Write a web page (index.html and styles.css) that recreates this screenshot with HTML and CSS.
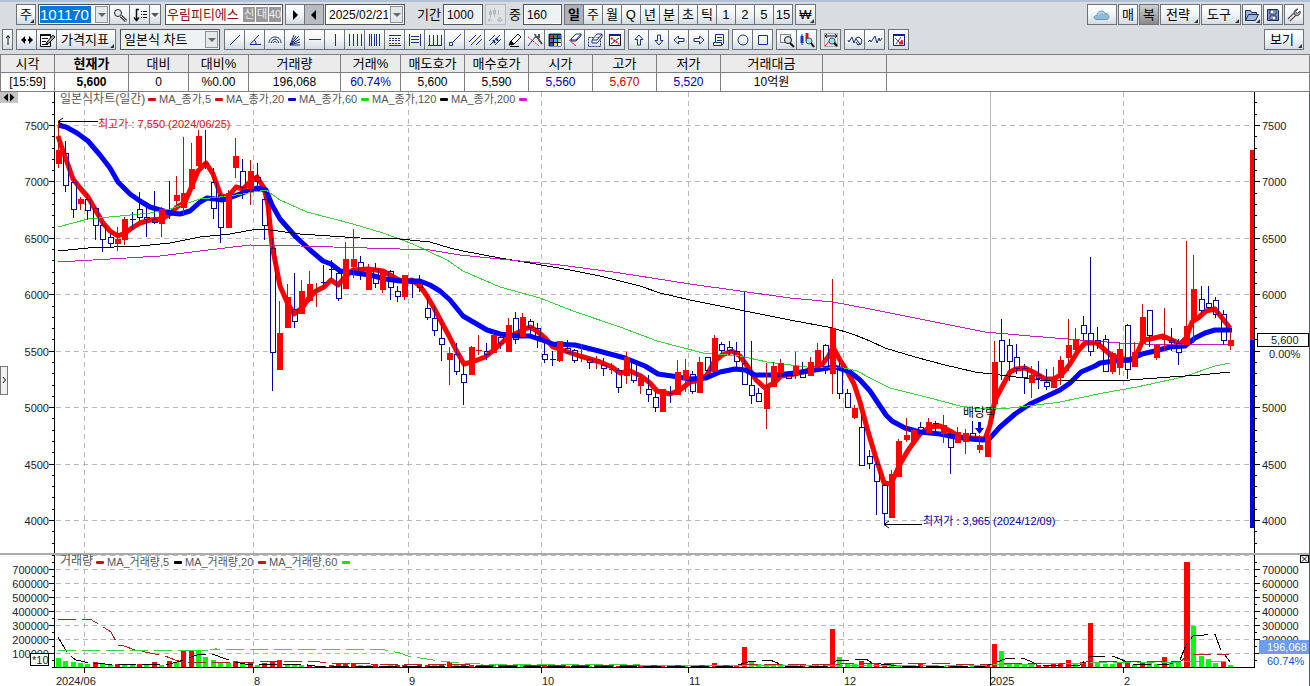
FILE: index.html
```
<!DOCTYPE html>
<html lang="ko">
<head>
    <meta charset="utf-8">
    <title>우림피티에스 차트</title>
    <link rel="stylesheet" href="styles.css">
</head>
<body>
    <header class="toolbars">
        <div class="bar top">
            <button class="btn first more">주</button>
            <div class="field code">
                <input class="code-input" aria-label="종목코드" value="101170">
                <button class="arrow" aria-label="종목 목록"></button>
            </div>
            <div class="group">
                <button class="btn" aria-label="종목 검색"><svg class="icon" viewBox="0 0 16 16"><circle cx="6" cy="6" r="3.5" stroke="#222" fill="#dfe9f2"/><circle cx="5" cy="5" r="1" fill="#fff" stroke="none"/><path d="M9 9l5 5" stroke="#222" stroke-width="3"/><path d="M9 9l5 5" stroke="#fff"/></svg></button>
                <button class="btn" aria-label="정렬"><svg class="icon" viewBox="0 0 16 16"><path d="M7 2.500H4.500V13M2 10.500l2.500 3 2.500-3" stroke="#111" stroke-width="1.500"/><path d="M9 4.500h1m1 0h4M9 7.500h1m1 0h4M9 10.500h1m1 0h4" stroke="#111"/></svg></button>
                <button class="btn thin" aria-label="정렬 목록"><span class="tri"></span></button>
            </div>
            <div class="field name"><span class="stock">우림피티에스</span><span class="tag">신</span><span class="tag">대</span><span class="tag">40</span></div>
            <div class="group step">
                <button class="btn" aria-label="다음 종목"><svg class="icon" viewBox="0 0 16 16"><path d="M6 3l5 5-5 5z" fill="#000" stroke="none"/></svg></button>
                <button class="btn gray" aria-label="이전 종목"><svg class="icon" viewBox="0 0 16 16"><path d="M10 3L5 8l5 5z" fill="#000" stroke="none"/></svg></button>
            </div>
            <div class="field date">
                <input aria-label="날짜" value="2025/02/21">
                <button class="arrow" aria-label="달력"></button>
            </div>
            <label class="caption" for="period">기간</label>
            <div class="field num"><input id="period" value="1000"></div>
            <button class="btn off" disabled aria-label="봉 간격"><svg class="icon" viewBox="0 0 16 16"><path d="M3.500 2v9M7.500 1v9M11.500 3v5M2 13h4m4 0h5M12 10v5M13 10l2 3-2 2M3 11l-2 2 2 2" stroke="#b4b9bd"/><path d="M2 4h3v4H2zM6 3h3v4H6z" fill="#b4b9bd" stroke="none"/></svg></button>
            <label class="caption mid" for="count">중</label>
            <div class="field num small"><input id="count" value="160"></div>
            <div class="group periods">
                <button class="btn pressed">일</button>
                <button class="btn">주</button>
                <button class="btn">월</button>
                <button class="btn">Q</button>
                <button class="btn">년</button>
                <button class="btn">분</button>
                <button class="btn">초</button>
                <button class="btn">틱</button>
                <button class="btn">1</button>
                <button class="btn">2</button>
                <button class="btn">5</button>
                <button class="btn">15</button>
            </div>
            <button class="btn more">₩</button>
            <div class="right">
                <button class="btn cloud" aria-label="클라우드"><svg class="icon wide" viewBox="0 0 18 16"><path d="M4 12.500c-4 0-4-4 0-4 0-5 7-6 8-2 4-1 6 6 1 6z" fill="#8fbbda" stroke="#6a98ba"/><path d="M5 8c1-3 5-4 6-1" stroke="#d5e8f4"/></svg></button>
                <button class="btn">매</button>
                <button class="btn dark">복</button>
                <button class="btn text more">전략</button>
                <button class="btn text more">도구</button>
                <button class="btn more" aria-label="열기"><svg class="icon" viewBox="0 0 16 16"><path d="M1.500 13.500v-10h5l1 2h5v2M1.500 13.500l3-6h10l-3 6z" fill="#9fb4e0" stroke="#182b55"/></svg></button>
                <button class="btn" aria-label="저장"><svg class="icon" viewBox="0 0 16 16"><path d="M2.500 2.500h10l1 1v10h-11z" fill="#7f96d0" stroke="#182b55"/><path d="M5 3h6v4H5zM5 9h6v4H5z" fill="#fff" stroke="#182b55"/><path d="M9 4v2M7 10v3" stroke="#182b55"/></svg></button>
                <button class="btn" aria-label="설정"><svg class="icon" viewBox="0 0 16 16"><path d="M3 13l6-6" stroke="#444" stroke-width="4"/><path d="M3 13l6-6" stroke="#ddd" stroke-width="2"/><path d="M12 2l-2.500 2.500 2 2L14 4c1 3-2 6-5 4-2-3 0-6 3-6z" fill="#aaa" stroke="#444"/></svg></button>
            </div>
        </div>
        <div class="bar second">
            <button class="btn up" aria-label="위로"><svg class="icon narrow" viewBox="0 0 8 16"><path d="M4 13V4M2 6l2-2.500L6 6" stroke="#111"/></svg></button>
            <div class="group">
                <button class="btn" aria-label="좌우"><svg class="icon" viewBox="0 0 16 16"><path d="M2 8l4-4v8zM14 8l-4-4v8z" fill="#000" stroke="none"/><path d="M5 8h2m2 0h2" stroke="#000" stroke-width="2"/></svg></button>
                <button class="btn" aria-label="편집"><svg class="icon" viewBox="0 0 16 16"><path d="M1.500 2.500h10v12h-10z" fill="#fff" stroke="#111"/><path d="M1 3h11" stroke="#111" stroke-width="2"/><path d="M3 6.500h6M3 9.500h4M3 12.500h6" stroke="#111"/><path d="M8 10l6-7 2 2-6 6-3 1z" fill="#aaa" stroke="#111"/></svg></button>
                <button class="btn label more">가격지표</button>
            </div>
            <div class="field type">
                <select aria-label="차트 종류"><option>일본식 차트</option></select>
                <span class="arrow"></span>
            </div>
            <div class="group">
                <button class="btn" aria-label="추세선"><svg class="icon" viewBox="0 0 16 16"><path d="M3 13L13 3"/></svg></button>
                <button class="btn" aria-label="각도선"><svg class="icon" viewBox="0 0 16 16"><path d="M12 3L3 12.500h11M7 8c2 1 2 3 2 4"/></svg></button>
                <button class="btn" aria-label="원호"><svg class="icon" viewBox="0 0 16 16"><path d="M2 11c0-8 12-8 12 0M4.500 11c0-5 7-5 7 0M6.500 11c0-2 3-2 3 0"/></svg></button>
                <button class="btn" aria-label="팬"><svg class="icon" viewBox="0 0 16 16"><path d="M3 13L7 3M3 13l6-9M3 13L12 4M3 13l10-6M3 13l10-3M3 13h10"/></svg></button>
                <button class="btn" aria-label="수평선"><svg class="icon" viewBox="0 0 16 16"><path d="M2 7.500h12"/></svg></button>
                <button class="btn" aria-label="수직선"><svg class="icon" viewBox="0 0 16 16"><path d="M8.500 2v12"/></svg></button>
                <button class="btn" aria-label="주기선"><svg class="icon" viewBox="0 0 16 16"><path d="M2.500 2v12M6.500 2v12M10.500 2v12M14.500 2v12"/></svg></button>
                <button class="btn" aria-label="피보나치 시간"><svg class="icon" viewBox="0 0 16 16"><path d="M2.500 2v12M4.500 2v12M7.500 2v12M9.500 2v12M12.500 2v12"/></svg></button>
                <button class="btn" aria-label="피보나치 조정"><svg class="icon" viewBox="0 0 16 16"><path d="M2 3.500h12M2 13.500h12"/><path d="M2 6.500h12M2 8.500h12M2 11.500h12" stroke-dasharray="2 1"/></svg></button>
                <button class="btn" aria-label="사분선"><svg class="icon" viewBox="0 0 16 16"><path d="M2.500 2v12M13.500 2v12M4 4.500h8M4 7.500h8M4 10.500h8"/></svg></button>
                <button class="btn" aria-label="삼분선"><svg class="icon" viewBox="0 0 16 16"><path d="M2.500 3v10M6.500 3v10M10.500 3v10M14.500 3v10M1 13.500h14"/></svg></button>
                <button class="btn" aria-label="연장선"><svg class="icon" viewBox="0 0 16 16"><path d="M5 11l9-9"/><path d="M2.500 10.500h3v3h-3z" fill="#fff"/></svg></button>
                <button class="btn" aria-label="평행선"><svg class="icon" viewBox="0 0 16 16"><path d="M2 10l7-7M4 13L14 3M9 13l6-6"/></svg></button>
                <button class="btn" aria-label="채널"><svg class="icon" viewBox="0 0 16 16"><path d="M2 9l6-6M3 13L13 3M8 13l6-6"/><path d="M6 8l2 3M9 6l2 3" stroke-width="2"/></svg></button>
                <button class="btn" aria-label="펜"><svg class="icon" viewBox="0 0 16 16"><path d="M3 11l1-2 7-7 3 3-7 7-3 1z" fill="#fff" stroke="#111"/><path d="M2 13l2-4 3 3z" fill="#111" stroke="#111"/><path d="M3 14.500h9" stroke="#111"/></svg></button>
                <button class="btn" aria-label="선 설정"><svg class="icon" viewBox="0 0 16 16"><path d="M1 14L9 4"/><path d="M1 5l11 9" stroke="#e02020" stroke-dasharray="2 1"/><path d="M10 5l5 7" stroke="#555" stroke-width="2"/><path d="M8 2l1 3h3V2" stroke="#555" stroke-width="2"/></svg></button>
                <button class="btn" aria-label="색상"><svg class="icon" viewBox="0 0 16 16"><path d="M2 2h12v12H2z" fill="#111"/><path d="M3 3h3v3H3z" fill="#e03030" stroke="none"/><path d="M7 3h3v3H7z" fill="#309060" stroke="none"/><path d="M11 3h3v3h-3z" fill="#3060d0" stroke="none"/><path d="M3 7h3v3H3z" fill="#8050c0" stroke="none"/><path d="M7 7h3v3H7z" fill="#40c0d0" stroke="none"/><path d="M11 7h3v3h-3z" fill="#80e0a0" stroke="none"/><path d="M3 11h3v3H3z" fill="#2040d0" stroke="none"/><path d="M7 11h3v3H7z" fill="#e0e040" stroke="none"/><path d="M11 11h3v3h-3z" fill="#fff" stroke="none"/></svg></button>
                <button class="btn" aria-label="지우개"><svg class="icon" viewBox="0 0 16 16"><path d="M4 7l5-5h5L9 8H4zM4 7v2h5l5-5V2" fill="#fff"/><path d="M2 8l7 6" stroke="#e02020"/></svg></button>
                <button class="btn" aria-label="영역 지우기"><svg class="icon" viewBox="0 0 16 16"><path d="M1.500 5.500h12v9h-12z" stroke-dasharray="2 1"/><path d="M5 8l5-6h5l-5 6zM5 8v3h5l5-6V2" fill="#fff"/></svg></button>
                <button class="btn" aria-label="전체 지우기"><svg class="icon" viewBox="0 0 16 16"><path d="M2.500 2.500h11v11h-11z" fill="#fff" stroke="#111"/><path d="M2 3h12" stroke="#10208a" stroke-width="2"/><path d="M4 12l8-6"/><path d="M4 6l8 6" stroke="#e02020" stroke-width="2" stroke-dasharray="2 1"/></svg></button>
            </div>
            <div class="group">
                <button class="btn" aria-label="위 화살표"><svg class="icon" viewBox="0 0 16 16"><path d="M8 3l4 4.500h-2.500V13h-3V7.500H4z"/></svg></button>
                <button class="btn" aria-label="아래 화살표"><svg class="icon" viewBox="0 0 16 16"><path d="M8 13l4-4.500h-2.500V3h-3v5.500H4z"/></svg></button>
                <button class="btn" aria-label="왼쪽 화살표"><svg class="icon" viewBox="0 0 16 16"><path d="M3 8l4.500-4v2.500H13v3H7.500V12z"/></svg></button>
                <button class="btn" aria-label="오른쪽 화살표"><svg class="icon" viewBox="0 0 16 16"><path d="M13 8L8.500 4v2.500H3v3h5.500V12z"/></svg></button>
                <button class="btn" aria-label="메모"><svg class="icon" viewBox="0 0 16 16"><path d="M4.500 2.500h8v9l-2 2h-8v-3h2zM6 5.500h5M6 8.500h5M10.500 13.500v-3h-6"/></svg></button>
            </div>
            <div class="group">
                <button class="btn" aria-label="원"><svg class="icon" viewBox="0 0 16 16"><circle cx="8" cy="8" r="5"/></svg></button>
                <button class="btn" aria-label="사각형"><svg class="icon" viewBox="0 0 16 16"><path d="M3.500 3.500h9v9h-9z"/></svg></button>
            </div>
            <div class="group">
                <button class="btn" aria-label="영역 확대"><svg class="icon" viewBox="0 0 16 16"><path d="M1.500 2.500h10v8h-10z" stroke="#111" stroke-dasharray="1 1"/><circle cx="9" cy="8" r="3.500" stroke="#111" fill="#d8e4ec"/><path d="M11 11l4 4" stroke="#111" stroke-width="2"/></svg></button>
                <button class="btn" aria-label="봉 확대"><svg class="icon" viewBox="0 0 16 16"><path d="M3 2v11" stroke="#1030d0"/><path d="M3 4v7" stroke="#1030d0" stroke-width="3"/><path d="M8 1v8" stroke="#e01010" stroke-width="3"/><circle cx="10" cy="9" r="3" stroke="#267" fill="#a8e0e8"/><path d="M12 11l3 4" stroke="#111" stroke-width="2"/></svg></button>
            </div>
            <button class="btn gray-lite" aria-label="전체 보기"><svg class="icon" viewBox="0 0 16 16"><path d="M1.500 1.500h13v13h-13z" stroke="#777" stroke-dasharray="1 1"/><path d="M2 4h12M4 2L2 4l2 2M12 2l2 2-2 2" stroke="#111"/><path d="M2 14l7-8 5 7" stroke="#e02020"/><circle cx="9" cy="9" r="3" stroke="#267" fill="#a8e0e8"/><path d="M11 11l3 3" stroke="#111" stroke-width="2"/></svg></button>
            <div class="group">
                <button class="btn" aria-label="패턴"><svg class="icon" viewBox="0 0 16 16"><path d="M1 8l1 2 3-5 2 6 2-5 3-1 3 3-1 4-3 1-2-3M9 7l4 5"/></svg></button>
                <button class="btn" aria-label="파동"><svg class="icon" viewBox="0 0 16 16"><path d="M1 10l2-2 1 2 4-6 2 7 2-5 1 3 2-3"/></svg></button>
            </div>
            <button class="btn" aria-label="차트 초기화"><svg class="icon" viewBox="0 0 16 16"><path d="M2.500 2.500h11v11h-11z" fill="#fff" stroke="#10208a"/><path d="M2 3h12" stroke="#10208a" stroke-width="2"/><path d="M4 6l6 6M10 5l-5 7" stroke="#8030a0"/><path d="M8 12l3-4 1 4z" fill="#e02020" stroke="#e02020"/></svg></button>
            <div class="right"><button class="btn text more">보기</button></div>
        </div>
    </header>

    <table class="quote">
        <colgroup>
            <col class="w54"><col class="w74"><col class="w60"><col class="w60"><col class="w92"><col class="w60"><col class="w64"><col class="w64"><col class="w64"><col class="w64"><col class="w64"><col class="w102"><col class="w64"><col>
        </colgroup>
        <tr><th>시각</th><th class="bold">현재가</th><th>대비</th><th>대비%</th><th>거래량</th><th>거래%</th><th>매도호가</th><th>매수호가</th><th>시가</th><th>고가</th><th>저가</th><th>거래대금</th><th></th><th></th></tr>
        <tr><td>[15:59]</td><td class="bold">5,600</td><td>0</td><td>%0.00</td><td>196,068</td><td class="down">60.74%</td><td>5,600</td><td>5,590</td><td class="down">5,560</td><td class="rise">5,670</td><td class="down">5,520</td><td>10억원</td><td></td><td></td></tr>
    </table>

    <svg class="chart" id="chart" viewBox="0 92 1310 594"></svg>
    <script src="chart.js"></script>
</body>
</html>
```
FILE: styles.css
```
* { box-sizing: border-box; }
body {
    margin: 0; background-color: #fff; color: #000;
    font-family: "Liberation Sans", "Noto Sans CJK KR", sans-serif;
    font-size: 13px; line-height: 16px; overflow-x: hidden;
}
button, input, select { font: inherit; color: inherit; margin: 0; border-radius: 0; }

/* toolbars */
.toolbars {
    background-color: #d9dde1; border-top: 2px solid #b3c1d4;
    padding: 2px 6px 4px 2px;
}
.bar { display: flex; align-items: center; height: 21px; gap: 3px; }
.top { gap: 2px; }
.second { margin-top: 4px; }
.group { display: flex; }
.group .btn { margin-left: -1px; }
.group .btn:first-child { margin-left: 0; }
.right { display: flex; gap: 1px; margin-left: auto; }
.btn {
    display: flex; align-items: center; justify-content: center; position: relative;
    flex: none; width: 21px; height: 21px; padding: 0;
    border: 1px solid #6c7379;
    background: linear-gradient(#fff, #f2f5f8 50%, #d3dbe3);
}
.periods .btn, .step .btn, .right .btn, .top .first { width: 20px; }
.first { margin-left: 14px; }
.group .thin { width: 12px; }
.up { width: 11px; }
.right .text { width: 40px; padding-right: 4px; }
.label { width: 60px; padding-right: 2px; }
.right .cloud { width: 30px; }
.more::after {
    content: ""; position: absolute; right: 1px; bottom: 1px;
    border: 2px solid #333; border-top-color: transparent; border-left-color: transparent;
}
.gray { background: #b8bbc0; }
.gray-lite { background: #e2e5e8; }
.off { border-color: #b4b9bd; background: #dfe3e6; }
.pressed { background: #aeb1b8; font-weight: bold; }
.dark { background: linear-gradient(#d0d0d0, #8a8a8a); }
.icon { flex: none; width: 16px; height: 16px; fill: none; stroke: #1b3080; }
.wide { width: 18px; }
.narrow { width: 8px; }
.tri { border: 4px solid transparent; border-top-color: #555; border-bottom: 0; }

.field {
    display: flex; align-items: center; flex: none; height: 21px; padding: 1px;
    border: 1px solid #4f5459; background-color: #fff;
}
.field input, .field select {
    flex: 1; min-width: 0; height: 17px; padding: 0 2px;
    border: 0; outline: 0; background: none; appearance: none;
}
.field input { font-size: 12px; }
.arrow {
    display: flex; align-items: center; justify-content: center; flex: none;
    width: 13px; height: 17px; padding: 0;
    border: 1px solid #8c9298; background-color: #e4e8eb;
}
.arrow::after { content: ""; border: 4px solid transparent; border-top-color: #666; border-bottom: 0; }
.code { width: 72px; }
.field .code-input { background-color: #0078d7; color: #fff; font-size: 15px; padding: 0; margin-right: 4px; }
.code + .group { margin-left: -3px; }
.name { width: 118px; margin-left: 2px; gap: 1px; }
.stock { flex: 1; color: #8b1010; white-space: nowrap; }
.tag { flex: none; width: 12px; height: 15px; background-color: #999; color: #eee; font-size: 11px; line-height: 15px; text-align: center; }
.date { width: 80px; margin-left: -1px; }
.num { width: 40px; }
.num input { background-color: #eff2f4; }
.small { width: 39px; }
.caption { margin-left: 10px; white-space: nowrap; }
.mid { margin-left: 1px; }
.type { width: 100px; margin: 0 1px; background-color: #eff2f4; }

/* quote table */
.quote { width: 100%; border-collapse: collapse; table-layout: fixed; }
.quote th, .quote td { border: 1px solid #808080; padding: 0; text-align: center; font-weight: normal; white-space: nowrap; }
.quote th { height: 18px; background-color: #ebebeb; }
.quote td { height: 19px; font-size: 12px; }
.quote .bold { font-weight: bold; }
.down { color: #0000b4; }
.rise { color: #d00000; }
.w54 { width: 54px; }
.w60 { width: 60px; }
.w64 { width: 64px; }
.w74 { width: 74px; }
.w92 { width: 92px; }
.w102 { width: 102px; }

/* chart */
.chart { display: block; width: 100%; font-size: 11px; }
.chart text { fill: #222; }
.chart .legend { fill: #555; }
.chart .title { fill: #555; font-size: 12px; }
.chart .note { fill: #000; font-size: 12px; }
.chart .max { fill: #d01010; }
.chart .min { fill: #0000a0; }
.chart .white { fill: #fff; }
.chart .ratio { fill: #1050c8; }
.end { text-anchor: end; }
.grid { stroke: #b8b8b8; stroke-dasharray: 5 4; }
.year { stroke: #b8b8b8; }
.axis { stroke: #000; fill: none; }
.split { fill: #acacac; }
.box { fill: #fff; stroke: #000; }
.handle { fill: #c4c4c4; }
.up-body { fill: #f00; }
.up-wick { stroke: #c01010; fill: none; }
.down-body { fill: #fff; stroke: #0000a0; }
.down-line { fill: none; stroke: #0000a0; }
.down-over { fill: none; stroke: #0000a0; opacity: 0.6; }
.vol-up { fill: #f00; }
.vol-down { fill: #0f0; }
.ma { fill: none; }
.ma5 { stroke: #f00; stroke-width: 5; stroke-linejoin: round; }
.ma20 { stroke: #00f; stroke-width: 5; stroke-linejoin: round; }
.ma60 { stroke: #3cd23c; }
.ma120 { stroke: #000; }
.ma200 { stroke: #c020c0; }
.vma { fill: none; stroke-dasharray: 18 6; }
.crisp { shape-rendering: crispEdges; }
```
FILE: chart.js
```
const chart = document.getElementById("chart");
const NS = "http://www.w3.org/2000/svg";

function draw(tag, attrs, text) {
    const node = document.createElementNS(NS, tag);
    for (const key in attrs) node.setAttribute(key, attrs[key]);
    if (text) node.textContent = text;
    chart.appendChild(node);
    return node;
}
function line(cls, x1, y1, x2, y2) {
    draw("path", { class: cls + " crisp", d: `M${x1} ${y1}L${x2} ${y2}` });
}
function rect(cls, x, y, width, height) {
    draw("rect", { class: cls + " crisp", x, y, width, height });
}
function label(cls, x, y, text) {
    draw("text", { class: cls, x, y }, text);
}
function path(cls, points) {
    draw("polyline", { class: cls, points });
}

// u = rise, d = fall : high, body top, body bottom, low
const candles = `u121,150,163,167 d141,153,185,191 d177,182,209,217 u197,199,203,209 d194,199,210,219 d207,208,225,239
d222,225,239,251 d233,237,243,247 u227,239,243,250 u217,219,239,244 d212,219,219,229 d192,209,217,220 d205,217,219,236
d191,219,222,223 u207,209,223,236 d181,210,210,218 u176,195,200,205 u137,193,207,215 u143,169,188,189 u130,136,165,166
d130,163,163,168 d168,182,208,218 d193,195,227,242 u190,193,227,227 u138,156,167,177 d159,171,187,198 u160,171,188,204
d163,177,181,190 d197,199,225,239 d238,248,352,390 u301,333,369,369 u284,297,327,327 d273,309,321,327 u280,291,313,313
u271,284,300,301 u283,290,290,306 d265,282,282,287 d260,269,269,278 d272,273,298,300 u242,259,288,288 u229,259,266,277
d256,262,273,279 u264,267,289,289 d263,269,283,287 u269,270,289,292 d270,271,287,299 d286,291,296,301 u275,275,296,299
d278,283,283,297 d275,283,287,291 d294,308,317,319 d306,318,330,335 d318,338,344,360 u347,353,359,384 d343,354,371,374
d363,374,382,404 u346,347,374,374 u335,350,350,354 d343,351,354,359 u332,335,352,352 d336,337,343,348 u318,325,351,351
d312,318,339,343 u313,317,336,336 d319,321,327,333 d323,328,336,347 d343,354,359,362 d351,359,359,365 u341,341,360,361
d340,348,352,353 d349,350,360,362 u344,357,357,361 d358,359,362,368 u356,359,359,368 d358,365,368,375 u363,369,369,373
d368,370,387,392 u352,357,375,383 d361,362,380,382 u376,378,385,393 d375,389,394,401 d392,397,407,411 u389,389,411,411
d386,393,393,402 u360,372,394,394 u359,370,379,391 d371,374,391,393 u357,362,392,392 d357,357,370,371 u335,338,371,371
d342,344,350,353 d341,347,350,354 d342,351,361,368 d292,363,384,384 d341,385,395,403 d388,393,401,401 u363,388,408,428
u362,366,386,386 u359,363,372,376 d371,375,378,378 u352,366,374,378 d362,372,377,377 u357,362,375,375 u343,350,367,368
d344,345,367,373 u279,328,373,393 d359,367,393,398 d389,393,407,407 u405,408,417,418 d415,427,465,465 d450,456,463,468
d461,464,481,514 d484,485,513,524 u470,474,517,517 u439,441,476,476 u418,435,439,441 u429,430,441,441 d422,427,431,433
u418,422,432,432 d421,423,423,432 u415,425,433,442 d431,434,447,473 u427,432,442,442 u429,433,441,453 d421,433,437,438
u435,445,449,452 u435,435,456,456 u341,362,403,403 d319,340,361,379 d339,345,361,380 d344,357,368,373 d364,368,377,393
u366,375,382,397 d361,375,378,388 d369,382,386,389 u367,377,387,387 u356,360,377,384 u319,345,357,370 u328,339,349,350
d316,325,333,339 d257,333,351,355 d327,340,343,348 d335,339,371,371 u352,353,371,373 u342,349,367,374 d324,325,369,378
u342,352,366,366 u304,317,343,344 d310,310,335,346 u344,345,357,359 u308,337,339,350 d328,340,342,350 d339,343,352,364
u241,326,344,344 u255,289,320,342 d286,299,310,313 d286,303,307,308 d297,300,314,317 d310,314,340,344 u330,340,345,349`
    .split(/\s+/).map(s => ({ up: s[0] == "u", v: s.slice(1).split(",").map(Number) }));

// bar heights of the volume pane
const volumes = `d9 d6 d5 d4 d3 u5 d3 d2 u3 d2 d2 u3 d2 u5 d2 u6 d5 u17 u17 d17 d10 d7 d5 d4 u6 d3 u4 d2 u4 u6 u7 d3 d3 d2
u2 d1 u1 u2 u3 u4 u4 d2 d2 u3 d1 d2 u2 u2 d1 u2 u2 d2 u2 u5 d3 u2 u2 d2 u2 d2 u2 u1 d1 d2 u1 d1 u2 u1 d1 u1 u1 u1 d1 u2
u1 d1 u1 d1 u1 u2 u1 d1 u1 d1 u1 d1 d2 u2 d1 u4 u1 d1 u1 u20 d6 d3 d2 d2 d3 d2 d2 u2 d2 d1 u2 u38 d10 d4 d3 u6 d3 u3
u3 d3 d2 u2 d2 u3 d1 u1 d1 u1 d1 u1 d1 u1 u2 u23 d16 d4 d3 d3 d3 u2 u2 u3 u4 u7 d4 u5 u44 d5 d3 d3 u4 u4 d2 u5 d4 d3
u10 d5 d5 u105 d41 d11 d8 d4 u5 d2`.split(/\s+/);

const months = [[84, 56, "2024/06"], [253, 254, "8"], [408, 409, "9"], [541, 542, "10"], [688, 689, "11"],
    [843, 844, "12"], [990, 990, "2025"], [1123, 1124, "2"]];
const xOf = i => Math.round(58 + i * 7.371);
const priceY = p => Math.round(125 + (7500 - p) * 0.11286) + 0.5;

// grid
for (let p = 4000; p <= 7500; p += 500) line("grid", 56, priceY(p), 1250, priceY(p));
for (let k = 1; k <= 8; k++) line("grid", 56, 667.5 - k * 14, 1254, 667.5 - k * 14);
for (const [x] of months) line(x == 990 ? "year" : "grid", x + 0.5, 92, x + 0.5, 667);

// price axes
line("axis", 54.5, 92, 54.5, 667);
line("axis", 1254.5, 92, 1254.5, 667);
for (let p = 3800; p <= 7700; p += 100) {
    const size = p % 500 ? 3 : 6;
    line("axis", 54 - size + 1, priceY(p), 54, priceY(p));
    line("axis", 1255, priceY(p), 1255 + size - 1, priceY(p));
    if (size == 6) {
        label("end", 49, priceY(p) + 4, String(p));
        label("", 1262, priceY(p) + 4, p == 5500 ? "" : String(p));
    }
}
rect("up-body", 1250, 150, 4, 190);
draw("rect", { fill: "#0000e0", x: 1250, y: 340, width: 4, height: 188 });

function candle(c, i, fallBody, fallLine) {
    const x = xOf(i), [high, top, bottom, low] = c.v;
    const wick = c.up ? "up-wick" : fallLine;
    line(wick, x + 0.5, high, x + 0.5, top);
    line(wick, x + 0.5, bottom, x + 0.5, low + 1);
    if (bottom == top) line(wick, x - 2, top + 0.5, x + 4, top + 0.5);
    else if (c.up) rect("up-body", x - 2, top, 6, bottom - top + 1);
    else rect(fallBody, x - 1.5, top + 0.5, 5, bottom - top);
}
candles.forEach((c, i) => candle(c, i, "down-body", "down-line"));

path("ma ma5", "58,136 62,148 73,179 80,188 88,197 96,211 103,223 110,231 118,236 125,233 132,228 140,223 150,220 162,219 170,214 177,207 185,202 191,188 198,171 206,163 213,174 221,196 228,197 236,187 243,189 250,182 257,177 264,188 268,205 272,245 280,286 287,302 294,314 302,308 309,298 316,291 324,287 331,280 338,285 346,276 353,270 368,269 383,271 397,279 405,282 412,280 420,286 427,296 434,308 442,323 449,336 456,350 464,364 472,362 485,357 495,349 508,337 515,334 523,330 530,327 537,331 545,338 553,347 565,351 580,356 600,362 612,367 620,373 630,371 641,376 650,383 657,391 670,394 680,390 690,382 700,380 707,375 714,362 722,355 732,351 740,356 748,367 756,380 765,388 774,383 781,376 795,374 810,370 820,367 828,357 833,347 840,360 847,371 854,384 860,402 867,428 875,455 884,483 891,484 899,466 907,452 914,442 921,433 930,427 940,426 950,431 960,437 972,438 985,439 990,425 995,400 1003,385 1010,372 1016,369 1025,368 1035,373 1045,379 1054,379 1063,373 1070,364 1078,351 1085,343 1097,343 1105,350 1112,356 1120,358 1128,360 1135,358 1143,340 1150,339 1163,336 1172,340 1180,344 1186,338 1192,322 1198,318 1206,311 1215,309 1222,318 1230,328");
path("ma ma20", "58,125 66,127 77,133 88,141 100,155 110,168 118,182 130,194 140,201 150,207 160,210 170,213 180,214 190,211 200,202 207,198 215,199 222,200 232,197 245,192 257,188 266,190 272,205 280,219 288,228 296,237 310,250 323,261 331,264 340,271 355,273 370,275 385,279 400,281 420,281 430,285 440,291 450,300 463,316 475,323 487,330 500,334 515,336 530,336 542,340 553,344 575,345 595,350 625,358 645,366 658,374 672,376 690,379 706,378 720,372 735,369 745,370 755,375 775,375 795,373 815,370 835,367 850,372 860,380 870,391 878,403 886,415 892,421 905,428 920,432 940,434 955,437 970,439 983,440 990,438 1000,427 1015,414 1030,404 1045,397 1060,390 1070,383 1081,372 1095,366 1100,363 1115,361 1130,360 1142,354 1155,351 1170,347 1185,346 1195,338 1205,333 1215,330 1232,330");
path("ma ma60 crisp", "58,227 88,219 120,216 150,213 170,209 200,199 230,196 266,190 280,200 307,212 353,224 383,233 413,244 447,260 463,271 500,287 540,298 573,311 620,327 657,341 703,353 740,356 767,362 807,367 840,367 857,371 870,378 890,388 930,398 960,406 980,409 1010,408 1053,403 1060,402 1103,393 1137,387 1183,377 1215,366 1230,363");
path("ma ma120 crisp", "58,251 88,248 140,246 170,243 200,237 230,234 257,229 270,230 300,234 360,238 400,239 430,242 450,248 463,251 500,258 530,263 570,270 600,276 640,286 660,293 690,300 740,310 790,320 833,328 855,335 870,341 885,348 915,357 945,365 975,372 1000,375 1040,380 1060,380 1130,380 1170,377 1200,375 1230,372");
path("ma ma200 crisp", "58,262 110,259 160,256 200,251 250,245 300,246 400,249 430,250 460,255 500,259 560,265 620,273 690,284 740,291 790,298 833,302 870,309 900,315 945,324 985,332 1030,336 1080,340 1120,343 1170,345 1230,344");

// candles again, so that they stay visible over the averages
candles.forEach((c, i) => candle(c, i, "down-over", "down-over"));

// highest and lowest price
line("axis", 58, 121.5, 98, 121.5);
draw("path", { class: "axis", d: "M63 118l-5 3.500 5 3.500" });
label("max", 98, 128, "최고가 : 7,550 (2024/06/25)");
line("axis", 884, 524.5, 922, 524.5);
draw("path", { class: "axis", d: "M889 521l-5 3.500 5 3.500" });
label("min", 923, 525, "최저가 : 3,965 (2024/12/09)");
label("note", 963, 417, "배당락");
draw("path", { fill: "#0000c0", d: "M978 422h3v6h3l-4.500 6-4.500-6h3z" });

// legends
function swatch(x, y, color) {
    draw("rect", { x, y, width: 8, height: 3, rx: 1, fill: color });
}
label("title", 60, 103, "일본식차트(일간)");
[[159, "5", "#d01010"], [226, "20", "#d01010"], [299, "60", "#0000d0"], [372, "120", "#20d820"], [451, "200", "#000"]]
    .forEach(([x, n, color]) => {
        label("legend", x, 103, "MA_종가," + n);
        swatch(x - 11, 98, color);
    });
swatch(519, 98, "#d818d8");

// volume pane
volumes.forEach((v, i) => {
    const h = Number(v.slice(1));
    rect(v[0] == "u" ? "vol-up" : "vol-down", xOf(i) - 2, 667 - h, i == 153 ? 6 : 5, h);
});
draw("polyline", { class: "vma crisp", stroke: "#b02020", points: "58,620 73,619 90,619 100,625 111,632 118,645 124,646 135,650 150,653 165,656 175,660 182,662 225,663 260,662 280,661 310,661 330,663 370,664 470,665 740,666 748,664 840,664 846,663 900,663 950,664 1000,664 1080,663 1093,661 1180,662 1186,657 1192,655 1230,654" });
draw("polyline", { class: "vma crisp", stroke: "#000", points: "58,637 62,644 69,655 76,660 90,663 120,665 170,664 180,661 197,655 213,654 220,657 235,662 245,664 300,664 315,666 735,666 748,662 770,660 785,666 828,666 836,661 866,659 872,663 900,666 985,666 997,662 1005,659 1022,658 1030,661 1040,666 1080,665 1090,656 1115,657 1125,661 1130,665 1170,664 1180,660 1186,645 1193,636 1215,634 1220,648 1230,662" });
draw("polyline", { class: "vma crisp", stroke: "#3cd23c", points: "58,651 210,650 215,649 385,650 400,653 408,656 420,658 440,661 460,663 480,664 640,665 750,666 990,665 1090,663 1180,662 1230,661" });
line("axis", 54, 667.5, 1255, 667.5);
for (let k = 1; k <= 7; k++) {
    const y = 667.5 - k * 14;
    line("axis", 49, y, 54, y);
    line("axis", 1255, y, 1260, y);
    label("end", 49, y + 4, k + "00000");
    if (k > 1) label("", 1262, y + 4, k + "00000");
}
for (let k = 0; k <= 8; k++) {
    line("axis", 52, 667.5 - k * 14, 54, 667.5 - k * 14);
    if (k == 8) continue;
    line("axis", 52, 660.5 - k * 14, 54, 660.5 - k * 14);
    line("axis", 1255, 660.5 - k * 14, 1257, 660.5 - k * 14);
}
rect("split", 0, 553, 1310, 2);
label("title", 60, 565, "거래량");
[[107, "5", "#d01010"], [185, "20", "#000"], [269, "60", "#d01010"]].forEach(([x, n, color]) => {
    label("legend", x, 566, "MA_거래량," + n);
    swatch(x - 11, 561, color);
});
swatch(342, 561, "#20d820");

for (const [x, textX, text] of months) {
    line("axis", x + 0.5, 667, x + 0.5, x == 990 ? 686 : 673);
    label("", textX, 685, text);
}

// boxes over the axes
rect("box", 30.5, 653.5, 18, 12);
label("", 32, 664, "*10");
rect("box", 1257.5, 333.5, 51, 13);
label("", 1271, 344, "5,600");
label("", 1269, 358, "0.00%");
draw("rect", { fill: "#6a9cf8", x: 1259, y: 640, width: 51, height: 14 });
label("white", 1267, 651, "196,068");
label("ratio", 1267, 665, "60.74%");
rect("handle", 0, 92, 18, 11);
draw("path", { d: "M8 93.500v8L3.500 97.500zM10 93.500v8l4.500-4z" });
draw("rect", { fill: "#f2f2f2", stroke: "#777", x: 0.5, y: 366.5, width: 7, height: 28 });
draw("path", { class: "axis", d: "M3 377l2.500 3-2.500 3" });
rect("box", 1300.5, 555.5, 8, 7);
draw("path", { class: "axis", d: "M1302 556.500l5 5m0-5l-5 5" });
draw("rect", { fill: "#555c63", x: 1309, y: 92, width: 1, height: 594 });
```
